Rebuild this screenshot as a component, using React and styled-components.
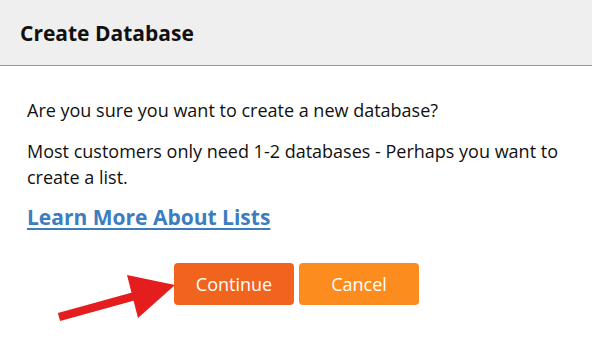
import React from "react"
import styled, { createGlobalStyle } from "styled-components"

const Global = createGlobalStyle`
  body {
    margin: 0;
    background: #fff;
    font-family: "Open Sans", "Liberation Sans", sans-serif;
  }
`

const Dialog = styled.div`
  position: relative;
  width: 592px;
  height: 340px;
  overflow: hidden;
  background: #fff;
`

const Header = styled.div`
  display: flex;
  align-items: center;
  padding: 0 20px;
  background: #efefef;
  border-bottom: 1px solid #9a9a9a;
  box-sizing: border-box;
  height: 66px;
`

const Title = styled.h2`
  margin: 0;
  font-size: 21px;
  font-weight: 700;
  color: #111;
`

const Body = styled.div`
  padding: 31px 24px 0 27px;
`

const Text = styled.p`
  margin: 0 0 15px;
  font-size: 18px;
  line-height: 26px;
  color: #111;
`

const LearnLink = styled.a`
  display: inline-block;
  margin-top: -2px;
  font-size: 21px;
  font-weight: 700;
  color: #3b7dbf;
  text-decoration: underline;
  text-underline-offset: 3px;
  cursor: pointer;
`

const Actions = styled.div`
  display: flex;
  gap: 5px;
  padding-left: 174px;
  margin-top: 32px;
`

const Button = styled.button`
  width: 120px;
  height: 42px;
  border: none;
  border-radius: 4px;
  background: ${p => (p.$primary ? "#f0641e" : "#fc8c1e")};
  color: #fff;
  font-family: inherit;
  font-size: 18px;
  cursor: pointer;
`

const Arrow = styled.svg`
  position: absolute;
  left: 0;
  top: 0;
  pointer-events: none;
`

export default function App() {
  return (
    <>
      <Global />
      <Dialog>
        <Header>
          <Title>Create Database</Title>
        </Header>
        <Body>
          <Text>Are you sure you want to create a new database?</Text>
          <Text>
            Most customers only need 1-2 databases - Perhaps you want to
            create a list.
          </Text>
          <LearnLink>Learn More About Lists</LearnLink>
        </Body>
        <Actions>
          <Button $primary>Continue</Button>
          <Button>Cancel</Button>
        </Actions>
        <Arrow width="592" height="340" viewBox="0 0 592 340">
          <line x1="59" y1="317" x2="135" y2="296" stroke="#e41e1e" strokeWidth="8.5" />
          <polygon points="127,275 175,285 138,318" fill="#e41e1e" />
        </Arrow>
      </Dialog>
    </>
  )
}
